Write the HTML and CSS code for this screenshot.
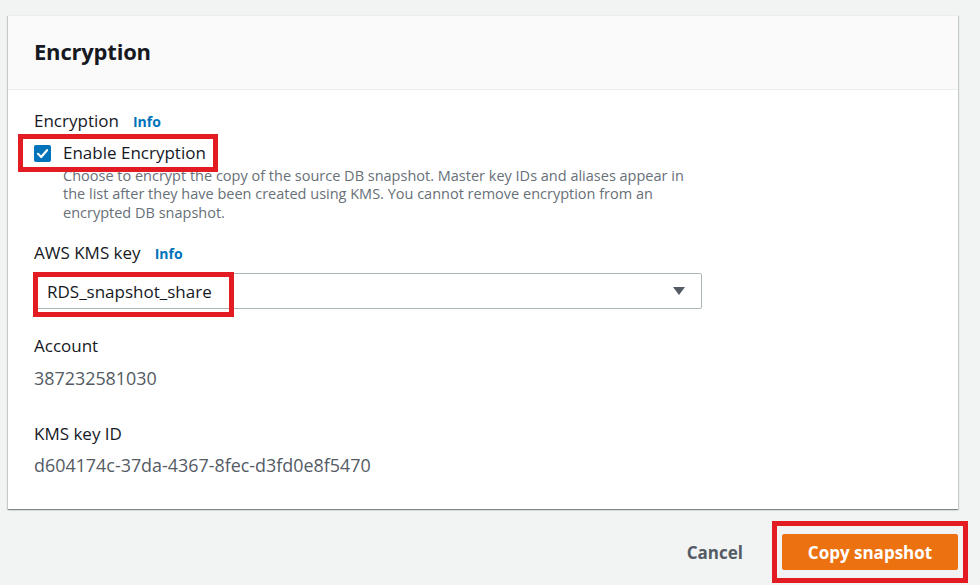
FILE: index.html
```html
<!DOCTYPE html>
<html lang="en">
<head>
<meta charset="utf-8">
<title>Encryption</title>
<link rel="stylesheet" href="styles.css">
</head>
<body>
<div class="page">
  <section class="card">
    <header class="card-header">
      <h2 class="card-title">Encryption</h2>
    </header>
    <div class="card-body">
      <div class="field field-enc">
        <div class="label">Encryption <a class="info" href="#">Info</a></div>
        <label class="check-row annot annot-check">
          <span class="checkbox">
            <svg viewBox="0 0 17 17" width="17" height="17" aria-hidden="true"><path d="M4 8.8 L7.2 12 L13 5.2" fill="none" stroke="#fff" stroke-width="2.2" stroke-linecap="round" stroke-linejoin="round"/></svg>
          </span>
          <span class="check-text">Enable Encryption</span>
        </label>
        <p class="desc">Choose to encrypt the copy of the source DB snapshot. Master key IDs and aliases appear in the list after they have been created using KMS. You cannot remove encryption from an encrypted DB snapshot.</p>
      </div>
      <div class="field field-kms">
        <div class="label">AWS KMS key <a class="info" href="#">Info</a></div>
        <div class="select annot annot-select">
          <span class="select-value">RDS_snapshot_share</span>
          <svg class="caret" viewBox="0 0 14 10" width="14" height="10" aria-hidden="true"><path d="M1 1 H13 L7 9 Z" fill="#545b64"/></svg>
        </div>
      </div>
      <div class="field field-account">
        <div class="label">Account</div>
        <div class="value">387232581030</div>
      </div>
      <div class="field field-keyid">
        <div class="label">KMS key ID</div>
        <div class="value">d604174c-37da-4367-8fec-d3fd0e8f5470</div>
      </div>
    </div>
  </section>
  <div class="actions">
    <button class="btn-link" type="button">Cancel</button>
    <button class="btn-primary annot annot-btn" type="button">Copy snapshot</button>
  </div>
</div>
</body>
</html>
```

FILE: styles.css
```css
*, *::before, *::after { box-sizing: border-box; }
html, body { margin: 0; padding: 0; }
body {
  background: #f2f3f3;
  font-family: "Open Sans", "Noto Sans", sans-serif;
  color: #16191f;
  width: 980px;
  height: 585px;
  overflow: hidden;
}
.page {
  padding: 15px 22px 0 8px;
}
.card {
  background: #fff;
  width: 950px;
  box-shadow: 0 1px 1px 0 rgba(0, 28, 36, 0.3), 1px 1px 1px 0 rgba(0, 28, 36, 0.15), -1px 1px 1px 0 rgba(0, 28, 36, 0.15);
  border-top: 1px solid #eaeded;
}
.card-header {
  background: #fafafa;
  height: 74px;
  border-bottom: 1px solid #eaeded;
  display: flex;
  align-items: center;
  padding: 0 26px;
}
.card-title {
  margin: 0;
  font-size: 22px;
  font-weight: 700;
  line-height: 28px;
  letter-spacing: -0.2px;
  padding-bottom: 4px;
}
.card-body {
  padding: 20px 26px 33px;
}
.field-kms { margin-top: 20px; }
.field-account { margin-top: 26px; }
.field-keyid { margin-top: 34px; }
.label {
  font-size: 17px;
  line-height: 22px;
  display: flex;
  align-items: baseline;
  gap: 14px;
}
.info {
  color: #0073bb;
  font-weight: 700;
  font-size: 14px;
  text-decoration: none;
}
.annot { position: relative; }
.annot::after {
  content: "";
  position: absolute;
  border: 5px solid #e31b23;
  pointer-events: none;
}
.check-row {
  display: inline-flex;
  align-items: center;
  gap: 12px;
  margin-top: 9px;
  height: 22px;
}
.annot-check::after { left: -16px; top: -8px; width: 200px; height: 38px; }
.checkbox {
  width: 17px;
  height: 17px;
  border-radius: 2px;
  background: #0073bb;
  display: inline-flex;
}
.check-text { font-size: 17px; line-height: 22px; }
.desc {
  margin: 0 0 0 29px;
  max-width: 632px;
  font-size: 14.5px;
  line-height: 18.5px;
  color: #687078;
}
.select {
  margin-top: 8px;
  width: 668px;
  height: 36px;
  border: 1px solid #aab7b8;
  border-radius: 2px;
  display: flex;
  align-items: center;
  justify-content: space-between;
  padding: 0 15px 0 12px;
}
.annot-select::after { left: -2px; top: -2px; width: 201px; height: 45px; }
.select-value { font-size: 17px; }
.caret { display: block; }
.value {
  margin-top: 10px;
  font-size: 17.9px;
  line-height: 22px;
  color: #545b64;
}
.field-keyid .value { margin-top: 9px; }
.actions {
  display: flex;
  justify-content: flex-end;
  align-items: center;
  width: 950px;
  margin-top: 25px;
  gap: 19px;
}
.btn-link {
  background: none;
  border: none;
  font-family: inherit;
  font-size: 17px;
  font-weight: 700;
  color: #545b64;
  padding: 4px 20px;
}
.btn-primary {
  background: #ec7211;
  border: 1px solid #ec7211;
  color: #fff;
  font-family: inherit;
  font-size: 17px;
  font-weight: 700;
  border-radius: 2px;
  height: 36px;
  width: 176px;
  padding: 0;
}
.annot-btn::after { left: -11px; top: -14px; width: 196px; height: 62px; }
```
